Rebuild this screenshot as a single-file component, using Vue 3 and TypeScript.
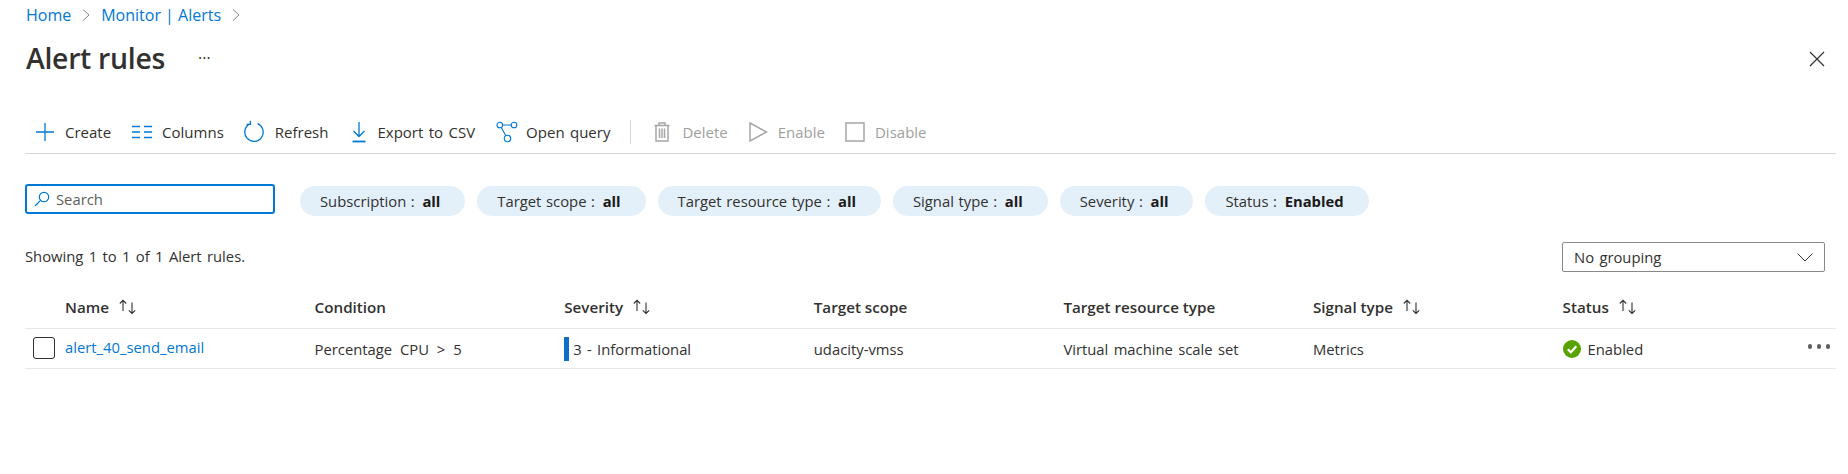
<script setup lang="ts">
interface Column { name: string; sortable: boolean }

const pills = [
  { label: 'Subscription', value: 'all' },
  { label: 'Target scope', value: 'all' },
  { label: 'Target resource type', value: 'all' },
  { label: 'Signal type', value: 'all' },
  { label: 'Severity', value: 'all' },
  { label: 'Status', value: 'Enabled' },
]

const columns: Column[] = [
  { name: 'Name', sortable: true },
  { name: 'Condition', sortable: false },
  { name: 'Severity', sortable: true },
  { name: 'Target scope', sortable: false },
  { name: 'Target resource type', sortable: false },
  { name: 'Signal type', sortable: true },
  { name: 'Status', sortable: true },
]
</script>

<template>
  <div class="page">
    <nav class="crumbs">
      <a>Home</a>
      <svg class="chev" width="10" height="14" viewBox="0 0 10 14"><path d="M2 1.5 8 7l-6 5.5" /></svg>
      <a>Monitor | Alerts</a>
      <svg class="chev" width="10" height="14" viewBox="0 0 10 14"><path d="M2 1.5 8 7l-6 5.5" /></svg>
    </nav>

    <header class="title-row">
      <h1>Alert rules</h1>
      <span class="title-more">···</span>
      <svg class="close" width="16" height="16" viewBox="0 0 16 16"><path d="M1 1l14 14M15 1 1 15" /></svg>
    </header>

    <div class="toolbar">
      <button class="tool create">
        <svg width="20" height="20" viewBox="0 0 20 20" class="ico"><path d="M10 1v18M1 10h18" /></svg>
        Create
      </button>
      <button class="tool columns">
        <svg width="22" height="16" viewBox="0 0 22 16" class="ico"><path d="M1 2.5h8M13 2.5h8M1 8h8M13 8h8M1 13.5h8M13 13.5h8" /></svg>
        Columns
      </button>
      <button class="tool refresh">
        <svg width="22" height="24" viewBox="0 0 22 24" class="ico"><path d="M14.5 3.6A9.2 9.2 0 1 1 6.8 3.9" /><path d="M7.4 .8v3.6H3.6" /></svg>
        Refresh
      </button>
      <button class="tool export">
        <svg width="16" height="22" viewBox="0 0 16 22" class="ico"><path d="M8 1v14M2.5 10 8 15.5 13.5 10" /><path class="thick" d="M1.500 20.500h13" /></svg>
        Export to CSV
      </button>
      <button class="tool query">
        <svg width="22" height="22" viewBox="0 0 22 22" class="ico thin">
          <circle cx="3.800" cy="4" r="2.800" /><circle cx="18" cy="4" r="2.800" /><circle cx="11.500" cy="17.500" r="3.200" />
          <path d="M6.600 4h8.600M5.300 6.400l4.500 8.300" />
        </svg>
        Open query
      </button>
      <span class="sep"></span>
      <button class="tool off delete">
        <svg width="16" height="20" viewBox="0 0 16 20" class="ico-off"><path d="M.5 3.5h15M5 3.5V1h6v2.500M2 3.500v15.500h12V3.500M5.500 6.500v9.500M8 6.500v9.500M10.500 6.500v9.500" /></svg>
        Delete
      </button>
      <button class="tool off enable">
        <svg width="19" height="20" viewBox="0 0 19 20" class="ico-off"><path d="M1 1l16.500 9L1 19z" /></svg>
        Enable
      </button>
      <button class="tool off disable">
        <svg width="20" height="20" viewBox="0 0 20 20" class="ico-off"><path d="M1 1h18v18H1z" /></svg>
        Disable
      </button>
    </div>

    <div class="filters">
      <label class="search">
        <svg width="16" height="16" viewBox="0 0 16 16"><circle cx="10" cy="6" r="4.700" /><path d="M6.600 9.400 1 15" /></svg>
        <span>Search</span>
      </label>
      <div class="pills">
        <span v-for="p in pills" :key="p.label" class="pill">{{ p.label }} : <b>{{ p.value }}</b></span>
      </div>
    </div>

    <div class="summary">
      <span class="count">Showing 1 to 1 of 1 Alert rules.</span>
      <div class="dropdown">
        <span>No grouping</span>
        <svg width="16" height="9" viewBox="0 0 16 9"><path d="M.500.500 8 8 15.500.500" /></svg>
      </div>
    </div>

    <div class="grid head">
      <span></span>
      <span v-for="c in columns" :key="c.name" class="th">
        {{ c.name }}
        <svg v-if="c.sortable" class="sort" width="20" height="16" viewBox="0 0 20 16"><path d="M5 12V1.500M1.800 4.500 5 1.300l3.200 3.200M14 3.500V14.500M10.800 11.300 14 14.500l3.200-3.200" /></svg>
      </span>
    </div>

    <div class="grid row">
      <span class="cell-check"><span class="check"></span></span>
      <a class="name">alert_40_send_email</a>
      <span class="cond">Percentage CPU &gt; 5</span>
      <span class="sev">3 - Informational</span>
      <span>udacity-vmss</span>
      <span>Virtual machine scale set</span>
      <span>Metrics</span>
      <span class="status">
        <svg width="18" height="18" viewBox="0 0 18 18"><circle cx="9" cy="9" r="9" fill="#57a300" /><path d="M4.800 9.300 7.800 12.300 13.300 6.300" fill="none" stroke="#fff" stroke-width="2.200" /></svg>
        Enabled
      </span>
      <span class="row-more"><i></i><i></i><i></i></span>
    </div>
  </div>
</template>

<style>
html, body { margin: 0; background: #fff; }
</style>

<style scoped>
.page {
  width: 1848px;
  height: 474px;
  overflow: hidden;
  box-sizing: border-box;
  padding: 0 12px 0 25px;
  font-family: 'Open Sans', 'Noto Sans', sans-serif;
  font-size: 14.8px;
  word-spacing: 1.500px;
  color: #323130;
  background: #fff;
}

.crumbs {
  display: flex;
  align-items: center;
  gap: 10px;
  height: 30px;
  padding-left: 1px;
  font-size: 16px;
  word-spacing: 0;
  color: #0078d4;
}
.chev { fill: none; stroke: #8a8886; stroke-width: 1; }

.title-row {
  display: flex;
  align-items: center;
  box-sizing: border-box;
  height: 58px;
  padding: 0 0 3px 1px;
}
h1 {
  margin: 0;
  font-size: 28.400px;
  font-weight: 600;
  letter-spacing: -0.3px;
  word-spacing: 0;
}
.title-more { margin-left: 33px; font-size: 16px; letter-spacing: 0; }
.close { margin: 3px 11px 0 auto; fill: none; stroke: #323130; stroke-width: 1.2; }

.toolbar {
  display: flex;
  align-items: center;
  height: 43px;
  padding-top: 22px;
  border-bottom: 1px solid #d6d6d6;
  font-size: 15px;
}
.tool {
  display: flex;
  align-items: center;
  padding: 0;
  border: 0;
  background: none;
  font: inherit;
  word-spacing: inherit;
  color: inherit;
  white-space: nowrap;
}
.tool.off { color: #a19f9d; }
.ico { fill: none; stroke: #0078d4; stroke-width: 1.300; }
.ico.thin { stroke-width: 1.100; }
.ico-off { fill: none; stroke: #a6a6a6; stroke-width: 1.500; }
.thick { stroke-width: 1.800; }
.create { margin-left: 10px; gap: 10px; }
.columns { margin-left: 20px; gap: 9px; }
.refresh { margin-left: 19px; gap: 10px; }
.export { margin-left: 23px; gap: 10px; }
.query { margin-left: 21px; gap: 8px; }
.sep { width: 1px; height: 24px; margin: 0 23px 0 20px; background: #d6d6d6; }
.delete { gap: 12px; }
.enable { margin-left: 21px; gap: 10px; }
.disable { margin-left: 20px; gap: 10px; }

.filters {
  display: flex;
  align-items: flex-start;
  margin-top: 30px;
}
.search {
  display: flex;
  align-items: center;
  gap: 6px;
  box-sizing: border-box;
  width: 250px;
  height: 30px;
  padding-left: 7px;
  border: 2px solid #0078d4;
  border-radius: 3px;
  color: #605e5c;
}
.search svg { fill: none; stroke: #0078d4; stroke-width: 1.200; }
.pills { display: flex; gap: 12px; margin: 2px 0 0 25px; }
.pill {
  display: flex;
  align-items: center;
  gap: 3px;
  height: 30px;
  padding: 0 25px 0 20px;
  border-radius: 15px;
  background: #e3f0fa;
  white-space: pre;
  word-spacing: 0.800px;
}
.pill b { font-weight: 700; color: #1b1a19; }

.summary {
  display: flex;
  align-items: center;
  justify-content: space-between;
  margin-top: 26px;
  height: 30px;
}
.count { padding-bottom: 3px; }
.dropdown {
  display: flex;
  align-items: center;
  justify-content: space-between;
  box-sizing: border-box;
  width: 263px;
  height: 30px;
  margin-right: 11px;
  padding: 0 11px;
  border: 1px solid #8a8886;
  border-radius: 2px;
}
.dropdown svg { fill: none; stroke: #323130; stroke-width: 1; }

.grid {
  display: grid;
  grid-template-columns: 40px repeat(6, 249.600px) 1fr auto;
  align-items: center;
}
.head {
  height: 57px;
  padding-top: 13px;
  border-bottom: 1px solid #e8e8e8;
  font-size: 15.200px;
  font-weight: 600;
  word-spacing: 0;
  box-sizing: border-box;
}
.th { display: flex; align-items: center; gap: 9px; }
.sort { fill: none; stroke: #323130; stroke-width: 1.100; }
.row {
  height: 40px;
  box-sizing: border-box;
  border-bottom: 1px solid #e8e8e8;
}
.cell-check { display: flex; padding: 0 0 2px 8px; }
.check {
  box-sizing: border-box;
  width: 22px;
  height: 22px;
  border: 1px solid #323130;
  border-radius: 3px;
}
.name { color: #0078d4; padding-bottom: 4px; }
.cond { word-spacing: 4px; }
.sev {
  display: flex;
  align-items: center;
  height: 24px;
  padding-left: 4px;
  border-left: 5px solid #0f6fc6;
  box-sizing: border-box;
}
.status { display: flex; align-items: center; gap: 7px; }
.row-more {
  display: flex;
  gap: 4.500px;
  padding: 0 6px 4px 0;
}
.row-more i { width: 4.500px; height: 4.500px; border-radius: 50%; background: #605e5c; }
</style>
